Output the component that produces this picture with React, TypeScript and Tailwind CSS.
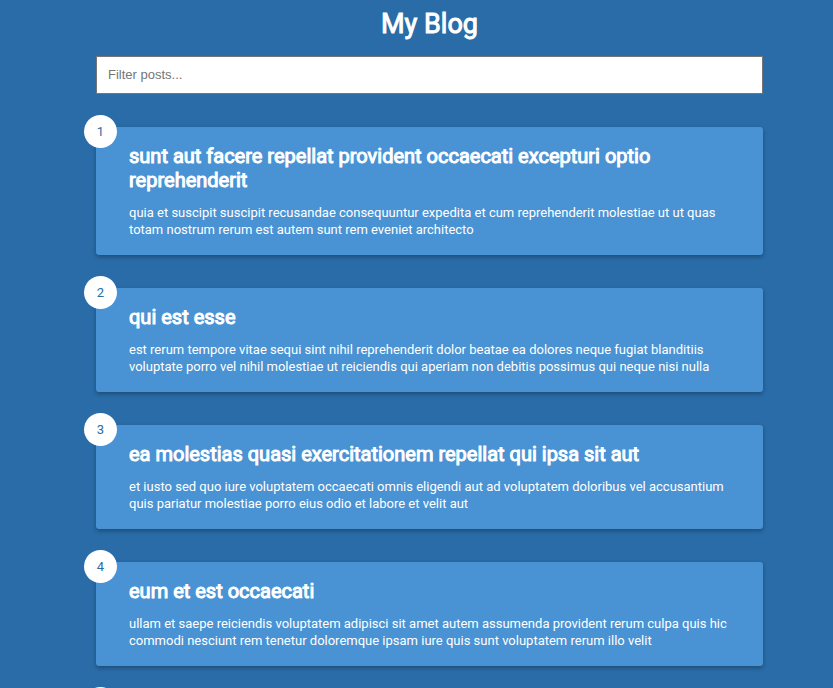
const posts = [
  {
    id: 1,
    title: "sunt aut facere repellat provident occaecati excepturi optio reprehenderit",
    body: "quia et suscipit suscipit recusandae consequuntur expedita et cum reprehenderit molestiae ut ut quas totam nostrum rerum est autem sunt rem eveniet architecto",
  },
  {
    id: 2,
    title: "qui est esse",
    body: "est rerum tempore vitae sequi sint nihil reprehenderit dolor beatae ea dolores neque fugiat blanditiis voluptate porro vel nihil molestiae ut reiciendis qui aperiam non debitis possimus qui neque nisi nulla",
  },
  {
    id: 3,
    title: "ea molestias quasi exercitationem repellat qui ipsa sit aut",
    body: "et iusto sed quo iure voluptatem occaecati omnis eligendi aut ad voluptatem doloribus vel accusantium quis pariatur molestiae porro eius odio et labore et velit aut",
  },
  {
    id: 4,
    title: "eum et est occaecati",
    body: "ullam et saepe reiciendis voluptatem adipisci sit amet autem assumenda provident rerum culpa quis hic commodi nesciunt rem tenetur doloremque ipsam iure quis sunt voluptatem rerum illo velit",
  },
];

export default function App() {
  return (
    <div className="h-screen overflow-hidden bg-[#296ca8] pr-[70px] pl-24 font-['Roboto',sans-serif] text-white">
      <h1 className="pt-1 text-center text-[27px] leading-[40px] font-normal [-webkit-text-stroke:1px_white]">My Blog</h1>
      <input
        type="text"
        aria-label="Filter posts"
        placeholder="Filter posts..."
        className="mt-3 block h-[38px] w-full border border-[#767676] bg-white px-[11px] pb-[2px] font-['Liberation_Sans',sans-serif] text-[13px] text-black placeholder:text-[#757575]"
      />
      <main className="mt-[33px] flex flex-col gap-[33px]">
        {posts.map((post) => (
          <article
            key={post.id}
            className="relative rounded-[3px] bg-[#4992d3] pt-[17px] pr-[17px] pb-[17px] pl-[33px] shadow-[0_2px_4px_rgba(0,0,0,0.3)]"
          >
            <span className="absolute -top-3 -left-3 flex size-[33px] items-center justify-center rounded-full bg-white text-[13px] text-[#296ca8]">
              {post.id}
            </span>
            <h2 className="text-[20px] leading-[24px] font-normal [-webkit-text-stroke:1px_white]">{post.title}</h2>
            <p className="mt-[12px] text-[13px] leading-[17px]">{post.body}</p>
          </article>
        ))}
        <article className="relative h-[104px] rounded-[3px] bg-[#4992d3]">
          <span className="absolute -top-3 -left-3 size-[33px] rounded-full bg-white" />
        </article>
      </main>
    </div>
  );
}
